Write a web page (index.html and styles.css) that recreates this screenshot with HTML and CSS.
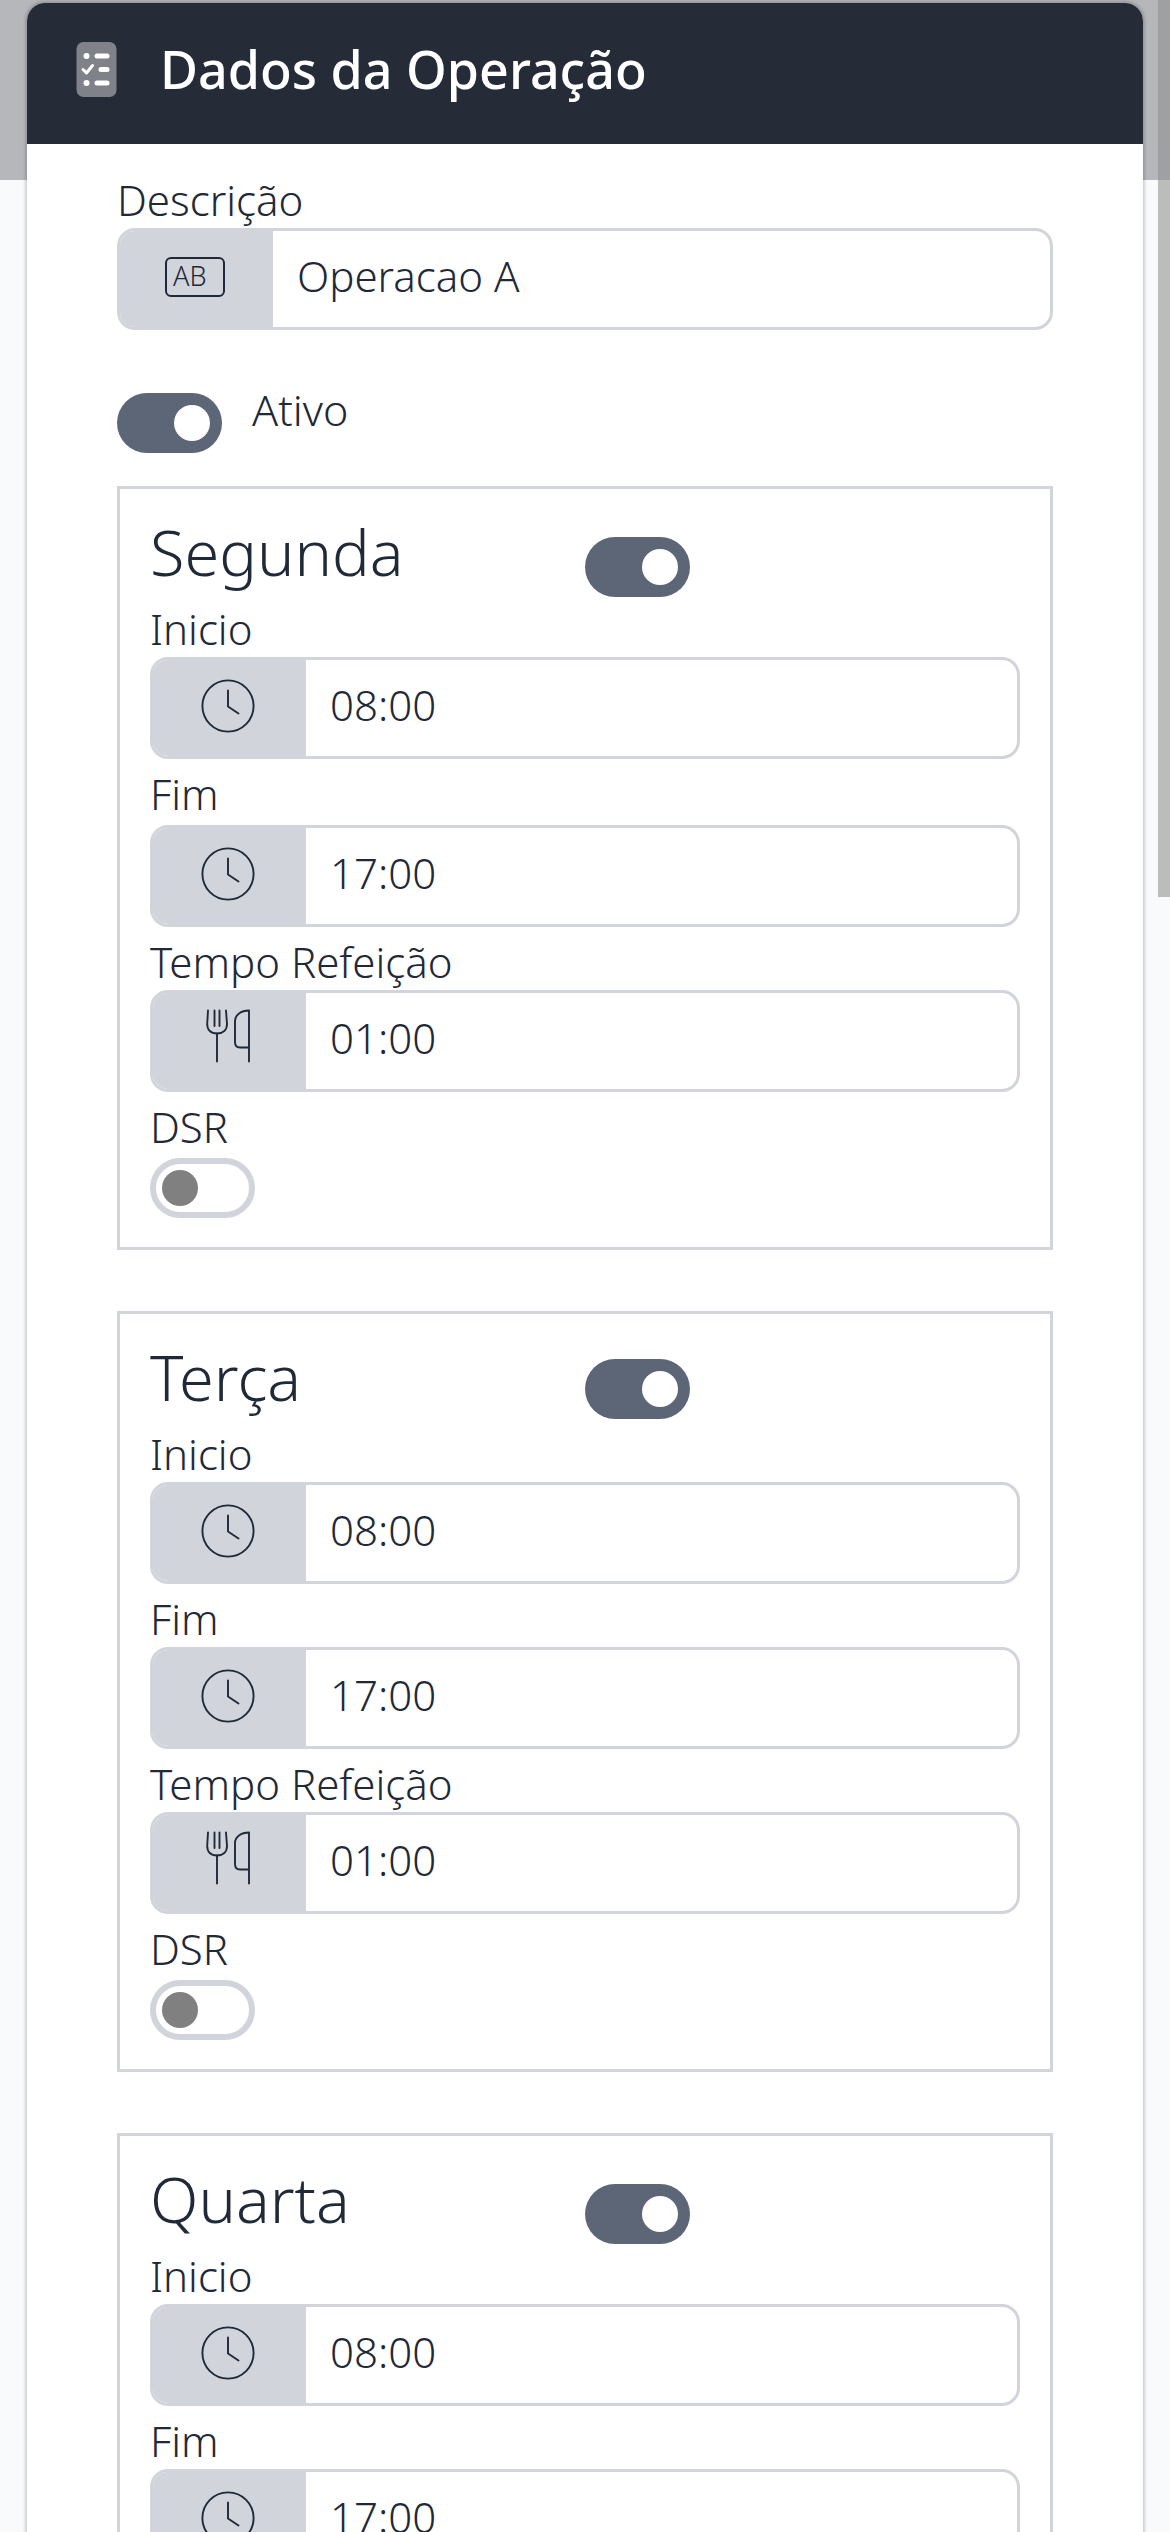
FILE: index.html
```html
<!DOCTYPE html>
<html lang="pt-BR">
<head>
<meta charset="utf-8">
<title>Dados da Operação</title>
<link rel="stylesheet" href="styles.css">
</head>
<body>
<svg class="sprite" width="0" height="0" aria-hidden="true">
  <symbol id="i-clock" viewBox="0 0 54 54">
    <circle cx="27" cy="27" r="25.6" fill="none" stroke="currentColor" stroke-width="1.9"/>
    <path d="M27 11.5V27.5L37.5 34.5" fill="none" stroke="currentColor" stroke-width="1.9" stroke-linecap="round" stroke-linejoin="round"/>
  </symbol>
  <symbol id="i-meal" viewBox="0 0 46 54">
    <g fill="none" stroke="currentColor" stroke-width="1.9" stroke-linecap="round" stroke-linejoin="round">
      <path d="M2 1.5L1.2 15C1.2 21 5 24.5 11 24.500C17 24.500 21 21 21 15L20 1.5"/>
      <path d="M8.5 1.5V17M13.500 1.5V17"/>
      <path d="M11 24.5V52.5"/>
      <path d="M43 38.5V52.5M43 1.5V38.5H34C31 38.5 29 36.500 29 33V12C29 6 35 1.5 43 1.5"/>
    </g>
  </symbol>
</svg>

<main class="card">
  <header class="card-header">
    <svg class="header-icon" viewBox="0 0 40 55" aria-hidden="true">
      <rect width="40" height="55" rx="7" fill="#808289"/>
      <g fill="#fff">
        <circle cx="10" cy="14" r="3"/>
        <circle cx="10" cy="41" r="3"/>
        <rect x="18" y="11.5" width="15" height="5" rx="2.5"/>
        <rect x="22" y="25" width="11" height="5" rx="2.5"/>
        <rect x="18" y="38.5" width="15" height="5" rx="2.5"/>
      </g>
      <path d="M6.500 27.500L10 31L16 23.500" fill="none" stroke="#fff" stroke-width="3" stroke-linecap="round" stroke-linejoin="round"/>
    </svg>
    <h1 class="card-title">Dados da Operação</h1>
  </header>

  <div class="card-body">
    <div class="label label-lead label-first">Descrição</div>
    <div class="field">
      <div class="addon">
        <svg class="icon-ab" viewBox="0 0 60 40" aria-hidden="true">
          <rect x="1" y="1" width="58" height="38" rx="5" fill="none" stroke="currentColor" stroke-width="2"/>
          <text x="8" y="29" class="icon-ab-text">AB</text>
        </svg>
      </div>
      <div class="value">Operacao A</div>
    </div>

    <div class="active-row">
      <span class="toggle toggle-on"><span class="knob"></span></span>
      <span class="active-label">Ativo</span>
    </div>

    <section class="day">
      <div class="day-head">
        <h2 class="day-name">Segunda</h2>
        <span class="toggle toggle-on day-toggle"><span class="knob"></span></span>
      </div>
      <div class="label label-lead">Inicio</div>
      <div class="field">
        <div class="addon"><svg class="icon-clock"><use href="#i-clock"/></svg></div>
        <div class="value">08:00</div>
      </div>
      <div class="label">Fim</div>
      <div class="field">
        <div class="addon"><svg class="icon-clock"><use href="#i-clock"/></svg></div>
        <div class="value">17:00</div>
      </div>
      <div class="label label-tight">Tempo Refeição</div>
      <div class="field">
        <div class="addon"><svg class="icon-meal"><use href="#i-meal"/></svg></div>
        <div class="value">01:00</div>
      </div>
      <div class="label">DSR</div>
      <span class="toggle toggle-off"><span class="knob"></span></span>
    </section>

    <section class="day">
      <div class="day-head">
        <h2 class="day-name">Terça</h2>
        <span class="toggle toggle-on day-toggle day-toggle-raised"><span class="knob"></span></span>
      </div>
      <div class="label label-lead">Inicio</div>
      <div class="field">
        <div class="addon"><svg class="icon-clock"><use href="#i-clock"/></svg></div>
        <div class="value">08:00</div>
      </div>
      <div class="label label-tight">Fim</div>
      <div class="field">
        <div class="addon"><svg class="icon-clock"><use href="#i-clock"/></svg></div>
        <div class="value">17:00</div>
      </div>
      <div class="label label-tight">Tempo Refeição</div>
      <div class="field">
        <div class="addon"><svg class="icon-meal"><use href="#i-meal"/></svg></div>
        <div class="value">01:00</div>
      </div>
      <div class="label">DSR</div>
      <span class="toggle toggle-off"><span class="knob"></span></span>
    </section>

    <section class="day">
      <div class="day-head">
        <h2 class="day-name">Quarta</h2>
        <span class="toggle toggle-on day-toggle"><span class="knob"></span></span>
      </div>
      <div class="label label-lead">Inicio</div>
      <div class="field">
        <div class="addon"><svg class="icon-clock"><use href="#i-clock"/></svg></div>
        <div class="value">08:00</div>
      </div>
      <div class="label label-tight">Fim</div>
      <div class="field">
        <div class="addon"><svg class="icon-clock"><use href="#i-clock"/></svg></div>
        <div class="value">17:00</div>
      </div>
    </section>
  </div>
</main>

<div class="scrollbar"><div class="scrollbar-thumb"></div></div>
</body>
</html>
```

FILE: styles.css
```css
html {
  height: 2532px;
  overflow: hidden;
}

body {
  margin: 0;
  height: 2532px;
  overflow: hidden;
  background: linear-gradient(#b6b7bb 0 180px, #f9fafc 180px);
  font-family: "Noto Sans", sans-serif;
  font-weight: 300;
  color: #1f2937;
}

.sprite {
  position: absolute;
}

/* Dialog card */
.card {
  margin: 3px 27px 0;
  min-height: 2529px;
  background: #fff;
  border-radius: 18px 18px 0 0;
  box-shadow: 0 0 3px 2px rgba(0, 0, 0, 0.17);
}

.card-header {
  display: flex;
  align-items: flex-start;
  height: 141px;
  padding-left: 49px;
  background: #252b37;
  border-radius: 18px 18px 0 0;
  box-sizing: border-box;
}

.header-icon {
  width: 41px;
  height: 55px;
  margin-top: 39px;
}

.card-title {
  margin: 31px 0 0 43px;
  color: #fff;
  font-size: 52px;
  line-height: 70px;
  font-weight: 500;
}

.card-body {
  padding: 15px 90px 0;
}

/* Labels and inputs */
.label {
  height: 63px;
  margin-bottom: 3px;
  padding-top: 3px;
  box-sizing: border-box;
  font-size: 42px;
  line-height: 63px;
}

.label-lead {
  padding-top: 6px;
}

.label-tight {
  margin-bottom: 0;
}

.label-first {
  margin-top: 3px;
}

.field {
  display: flex;
  height: 102px;
  border: 3px solid #d1d5db;
  border-radius: 18px;
  box-sizing: border-box;
  overflow: hidden;
  background: #fff;
}

.addon {
  display: flex;
  align-items: flex-start;
  justify-content: center;
  flex: 0 0 153px;
  background: #d1d5db;
}

.value {
  padding-left: 24px;
  font-size: 42px;
  line-height: 90px;
}

.icon-ab {
  width: 60px;
  height: 40px;
  margin: 26px 3px 0 0;
  color: #1f2937;
}

.icon-ab-text {
  font-size: 27px;
  font-weight: 300;
  fill: currentColor;
}

.icon-clock {
  width: 54px;
  height: 54px;
  margin: 19px 3px 0 0;
  color: #1f2937;
}

.icon-meal {
  width: 46px;
  height: 54px;
  margin: 16px 1px 0 0;
  color: #1f2937;
}

/* Switches */
.toggle {
  display: block;
  position: relative;
  flex: none;
  width: 105px;
  height: 60px;
  border-radius: 30px;
  box-sizing: border-box;
}

.toggle-on {
  background: #5d6677;
}

.toggle-off {
  background: #fff;
  border: 6px solid #d1d5db;
}

.knob {
  position: absolute;
  width: 36px;
  height: 36px;
  border-radius: 50%;
}

.toggle-on .knob {
  top: 12px;
  right: 12px;
  background: #fff;
}

.toggle-off .knob {
  top: 6px;
  left: 6px;
  background: #808080;
}

.active-row {
  display: flex;
  margin-top: 63px;
}

.active-label {
  margin-left: 30px;
  font-size: 43px;
  line-height: 48px;
  margin-top: -7px;
}

/* Weekday panels */
.day {
  margin-top: 33px;
  padding: 0 30px 29px;
  border: 3px solid #d1d5db;
}

.day + .day {
  margin-top: 61px;
}

.day-head {
  display: flex;
  height: 102px;
}

.day-name {
  flex: 0 0 435px;
  margin: 0;
  padding-top: 24px;
  font-size: 63px;
  line-height: 78px;
  font-weight: 300;
}

.day-toggle {
  margin-top: 48px;
}

.day-toggle-raised {
  margin-top: 45px;
}

/* Page scrollbar */
.scrollbar {
  position: fixed;
  top: 0;
  right: 0;
  bottom: 0;
  width: 12px;
}

.scrollbar-thumb {
  height: 897px;
  background: linear-gradient(#9fa0a2 0 180px, #bbbdbb 180px);
}
```
